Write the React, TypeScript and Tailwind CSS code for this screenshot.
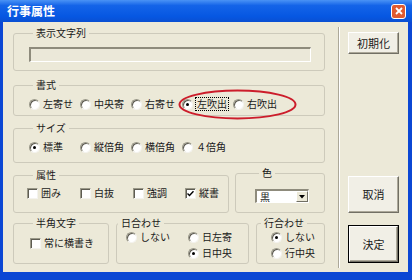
import React from 'react';

type OptProps = {
  kind: 'radio' | 'check';
  label: string;
  checked?: boolean;
  focus?: boolean;
  w?: string;
};

const Radio = ({ checked }: { checked?: boolean }) => (
  <span className="inline-flex w-[11px] h-[11px] shrink-0 items-center justify-center rounded-full bg-white border border-t-[#9a9888] border-l-[#9a9888] border-r-[#f4f3ee] border-b-[#f4f3ee] shadow-[inset_1px_1px_0_#5e5c52]">
    {checked && <span className="w-[3px] h-[3px] rounded-full bg-black" />}
  </span>
);

const Check = ({ checked }: { checked?: boolean }) => (
  <span className="inline-flex w-[11px] h-[11px] shrink-0 items-center justify-center bg-white border border-t-[#9a9888] border-l-[#9a9888] border-r-[#f4f3ee] border-b-[#f4f3ee] shadow-[inset_1px_1px_0_#5e5c52]">
    {checked && (
      <svg width="7" height="7" viewBox="0 0 7 7">
        <path d="M0.5 3.5 L2.5 5.5 L6.5 1.2" fill="none" stroke="#000" strokeWidth="1.4" />
      </svg>
    )}
  </span>
);

const Opt: React.FC<OptProps> = ({ kind, label, checked, focus, w = '' }) => (
  <div className={`flex items-center gap-[3px] h-[14px] ${w}`}>
    {kind === 'radio' ? <Radio checked={checked} /> : <Check checked={checked} />}
    <span
      className={`leading-[12px] whitespace-nowrap ${
        focus ? 'outline outline-1 outline-dotted outline-black outline-offset-0 px-[1px]' : ''
      }`}
    >
      {label}
    </span>
  </div>
);

const Btn = ({ label, h, isDefault }: { label: string; h: string; isDefault?: boolean }) => (
  <div
    className={`w-[51px] ${h} flex items-center justify-center text-[11px] ${
      isDefault ? 'border border-black' : ''
    }`}
  >
    <div className="w-full h-full flex items-center justify-center bg-[#f1efe6] border border-t-white border-l-white border-r-[#716f64] border-b-[#716f64] shadow-[inset_-1px_-1px_0_#aca899]">
      {label}
    </div>
  </div>
);

export default function App() {
  return (
    <div className="w-[412px] h-[280px] flex flex-col bg-[#0b47d4] text-[10px] text-[#1a1a1a] font-['Noto_Sans_CJK_JP','Noto_Sans',sans-serif] overflow-hidden">
      {/* title bar */}
      <div className="h-[22px] shrink-0 flex items-center justify-between pl-[7px] pr-[6px] bg-[linear-gradient(to_bottom,#4a93f5_0%,#1464e8_25%,#0657e2_75%,#0a4fd2_100%)]">
        <span className="text-white font-bold text-[12px] leading-none">行事属性</span>
        <div className="w-[15px] h-[15px] flex items-center justify-center rounded-[3px] border border-white bg-[#e05a30]">
          <svg width="8" height="8" viewBox="0 0 8 8">
            <path d="M1 1 L7 7 M7 1 L1 7" stroke="#fff" strokeWidth="1.8" />
          </svg>
        </div>
      </div>

      {/* body */}
      <div className="flex-1 ml-[3px] mr-[4px] mb-[8px] flex bg-[#ece9d8]">
        {/* left groups */}
        <div className="ml-[10px] pt-[4px] w-[312px] flex flex-col">
          <fieldset className="h-[45px] border border-[#cdcabb] rounded-[3px]">
            <legend className="ml-[19px] px-[3px] leading-[14px]">表示文字列</legend>
            <div className="ml-[15px] mt-[7px] w-[282px] h-[15px] bg-[#ebe8d9] border-t-2 border-l-2 border-t-[#8e8b7c] border-l-[#8e8b7c] border-r border-b border-r-white border-b-white" />
          </fieldset>

          <fieldset className="mt-[7px] h-[38px] border border-[#cdcabb] rounded-[3px]">
            <legend className="ml-[19px] px-[3px] leading-[14px]">書式</legend>
            <div className="relative mt-[5px] pl-[15px] flex">
              <Opt kind="radio" label="左寄せ" w="w-[51px]" />
              <Opt kind="radio" label="中央寄" w="w-[51px]" />
              <Opt kind="radio" label="右寄せ" w="w-[51px]" />
              <Opt kind="radio" label="左吹出" checked focus w="w-[51px]" />
              <Opt kind="radio" label="右吹出" />
              <svg className="absolute left-[164px] -top-[8px]" width="119" height="31" viewBox="0 0 119 31">
                <ellipse cx="59.5" cy="15.5" rx="58" ry="14" fill="none" stroke="#cc1d2b" strokeWidth="2" />
              </svg>
            </div>
          </fieldset>

          <fieldset className="mt-[5px] h-[42px] border border-[#cdcabb] rounded-[3px]">
            <legend className="ml-[19px] px-[3px] leading-[14px]">サイズ</legend>
            <div className="mt-[5px] pl-[15px] flex">
              <Opt kind="radio" label="標準" checked w="w-[51px]" />
              <Opt kind="radio" label="縦倍角" w="w-[51px]" />
              <Opt kind="radio" label="横倍角" w="w-[51px]" />
              <Opt kind="radio" label="４倍角" />
            </div>
          </fieldset>

          <div className="mt-[3px] flex items-start gap-[6px]">
            <fieldset className="mt-[2px] w-[216px] h-[45px] border border-[#cdcabb] rounded-[3px]">
              <legend className="ml-[19px] px-[3px] leading-[14px]">属性</legend>
              <div className="mt-[4px] pl-[13px] flex">
                <Opt kind="check" label="囲み" w="w-[53px]" />
                <Opt kind="check" label="白抜" w="w-[53px]" />
                <Opt kind="check" label="強調" w="w-[52px]" />
                <Opt kind="check" label="縦書" checked />
              </div>
            </fieldset>
            <fieldset className="w-[90px] h-[47px] border border-[#cdcabb] rounded-[3px]">
              <legend className="ml-[23px] px-[3px] leading-[14px]">色</legend>
              <div className="ml-[19px] mt-[9px] w-[54px] h-[14px] flex items-stretch bg-white border-t-2 border-l-2 border-t-[#8e8b7c] border-l-[#8e8b7c] border-r border-b border-r-white border-b-white">
                <span className="flex-1 pl-[3px] leading-[12px]">黒</span>
                <span className="w-[12px] flex items-center justify-center bg-[#ece9d8] border border-t-white border-l-white border-r-[#716f64] border-b-[#716f64]">
                  <svg width="6" height="4" viewBox="0 0 6 4">
                    <path d="M0 0 H6 L3 3.5 Z" fill="#000" />
                  </svg>
                </span>
              </div>
            </fieldset>
          </div>

          <div className="mt-[3px] flex gap-[7px]">
            <fieldset className="w-[96px] h-[48px] border border-[#cdcabb] rounded-[3px]">
              <legend className="ml-[19px] px-[3px] leading-[14px]">半角文字</legend>
              <div className="mt-[6px] pl-[16px]">
                <Opt kind="check" label="常に横書き" />
              </div>
            </fieldset>
            <fieldset className="w-[133px] h-[48px] border border-[#cdcabb] rounded-[3px]">
              <legend className="ml-[1px] px-[3px] leading-[14px]">日合わせ</legend>
              <div className="pl-[9px] flex">
                <div className="w-[62px]">
                  <Opt kind="radio" label="しない" />
                </div>
                <div className="flex flex-col gap-[2px]">
                  <Opt kind="radio" label="日左寄" />
                  <Opt kind="radio" label="日中央" checked />
                </div>
              </div>
            </fieldset>
            <fieldset className="w-[69px] h-[48px] border border-[#cdcabb] rounded-[3px]">
              <legend className="ml-[4px] px-[3px] leading-[14px]">行合わせ</legend>
              <div className="pl-[14px] flex flex-col gap-[2px]">
                <Opt kind="radio" label="しない" checked />
                <Opt kind="radio" label="行中央" />
              </div>
            </fieldset>
          </div>
        </div>

        {/* separator */}
        <div className="ml-[13px] mt-[5px] h-[241px] w-[2px] border-l border-l-[#aca899] border-r border-r-white" />

        {/* buttons */}
        <div className="ml-[8px] flex flex-col">
          <div className="mt-[10px]">
            <Btn label="初期化" h="h-[22px]" />
          </div>
          <div className="mt-[122px]">
            <Btn label="取消" h="h-[37px]" />
          </div>
          <div className="mt-[12px]">
            <Btn label="決定" h="h-[38px]" isDefault />
          </div>
        </div>
      </div>
    </div>
  );
}
